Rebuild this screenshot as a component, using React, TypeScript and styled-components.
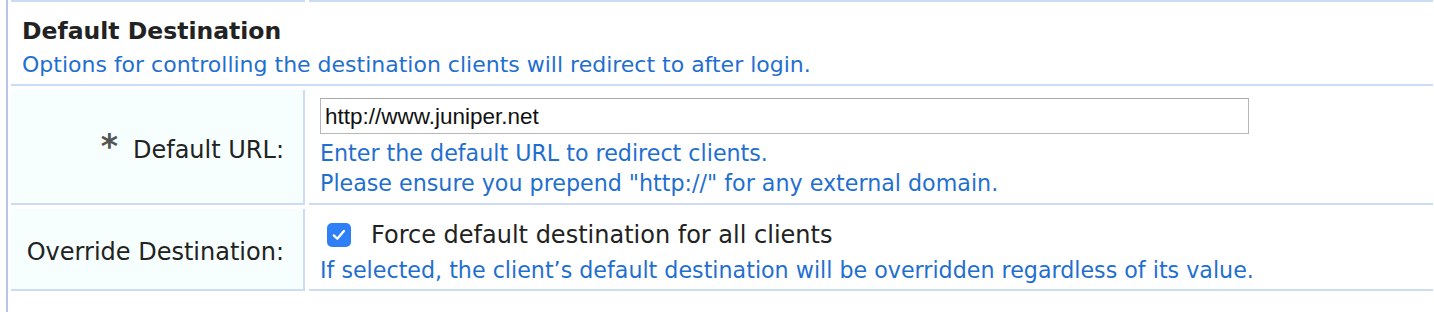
import React from 'react';
import styled, { createGlobalStyle } from 'styled-components';

const GlobalStyle = createGlobalStyle`
  html, body {
    margin: 0;
    padding: 0;
    background: #ffffff;
    font-family: 'DejaVu Sans', Verdana, sans-serif;
    color: #222222;
  }
`;

const BORDER = '#cddcf6';
const HELP_BLUE = '#1f6fd1';

const Sheet = styled.div`
  margin: 0 1px 0 6px;
  min-height: 100vh;
  box-sizing: border-box;
  border-left: 2px solid #b9c4ea;
  padding-left: 3px;
  display: grid;
  grid-template-columns: 294px 1fr;
  grid-auto-rows: min-content;
  column-gap: 4px;
  row-gap: 4px;
`;

const StubCell = styled.div`
  height: 0;
  border-bottom: 2px solid ${BORDER};
`;

const SectionHeader = styled.div`
  grid-column: 1 / -1;
  padding: 10px 0 3px 11px;
  border-bottom: 2px solid ${BORDER};
`;

const SectionTitle = styled.h3`
  margin: 0;
  font-size: 23.5px;
  line-height: 30px;
  font-weight: 700;
  color: #222222;
`;

const SectionHint = styled.div`
  margin-top: 2px;
  font-size: 22px;
  line-height: 33px;
  color: ${HELP_BLUE};
`;

const LabelCell = styled.div`
  background: #f7fefe;
  border-right: 2px solid ${BORDER};
  border-bottom: 2px solid ${BORDER};
  display: flex;
  align-items: center;
  justify-content: flex-end;
  padding: 6px 19px 0 0;
  font-size: 24px;
  color: #222222;
`;

const Required = styled.span`
  font-size: 33px;
  font-weight: 700;
  line-height: 1;
  color: #555555;
  margin-right: 15px;
  position: relative;
  top: -3px;
`;

const ValueCell = styled.div<{ $top: number; $bottom: number }>`
  border-bottom: 2px solid ${BORDER};
  padding: ${({ $top }) => $top}px 0 ${({ $bottom }) => $bottom}px 11px;
`;

const UrlInput = styled.input`
  display: block;
  box-sizing: border-box;
  width: 929px;
  height: 36px;
  margin: 0;
  padding: 2px 4px 0;
  border: 1px solid #b7b7b7;
  border-top-color: #a9a9a9;
  border-radius: 0;
  font-family: 'Liberation Sans', Arial, sans-serif;
  font-size: 22.5px;
  color: #111111;
  background: #ffffff;
  outline: none;
`;

const Help = styled.div<{ $gap?: number }>`
  margin-top: ${({ $gap }) => $gap ?? 0}px;
  font-size: 22.2px;
  line-height: 30px;
  color: ${HELP_BLUE};
`;

const CheckRow = styled.label`
  display: flex;
  align-items: center;
  height: 30px;
  font-size: 24px;
  color: #222222;
`;

const CheckBox = styled.span`
  display: inline-flex;
  align-items: center;
  justify-content: center;
  width: 24px;
  height: 24px;
  margin: 0 20px 0 7px;
  border-radius: 5px;
  background: #2f80f6;
  flex-shrink: 0;
`;

const Tick = () => (
  <svg width="24" height="24" viewBox="0 0 24 24" fill="none">
    <path d="M6.8 12.4 L10.3 15.8 L16.9 8" stroke="#ffffff" strokeWidth="2.3" strokeLinecap="round" strokeLinejoin="round" />
  </svg>
);

export default function App() {
  return (
    <>
      <GlobalStyle />
      <Sheet>
        <StubCell />
        <StubCell />

        <SectionHeader>
          <SectionTitle>Default Destination</SectionTitle>
          <SectionHint>Options for controlling the destination clients will redirect to after login.</SectionHint>
        </SectionHeader>

        <LabelCell>
          <Required>*</Required>
          Default URL:
        </LabelCell>
        <ValueCell $top={8} $bottom={5}>
          <UrlInput type="text" defaultValue="http://www.juniper.net" />
          <Help $gap={4}>Enter the default URL to redirect clients.</Help>
          <Help>Please ensure you prepend "http://" for any external domain.</Help>
        </ValueCell>

        <LabelCell>Override Destination:</LabelCell>
        <ValueCell $top={11} $bottom={4}>
          <CheckRow>
            <CheckBox>
              <Tick />
            </CheckBox>
            Force default destination for all clients
          </CheckRow>
          <Help $gap={5}>If selected, the client’s default destination will be overridden regardless of its value.</Help>
        </ValueCell>
      </Sheet>
    </>
  );
}
